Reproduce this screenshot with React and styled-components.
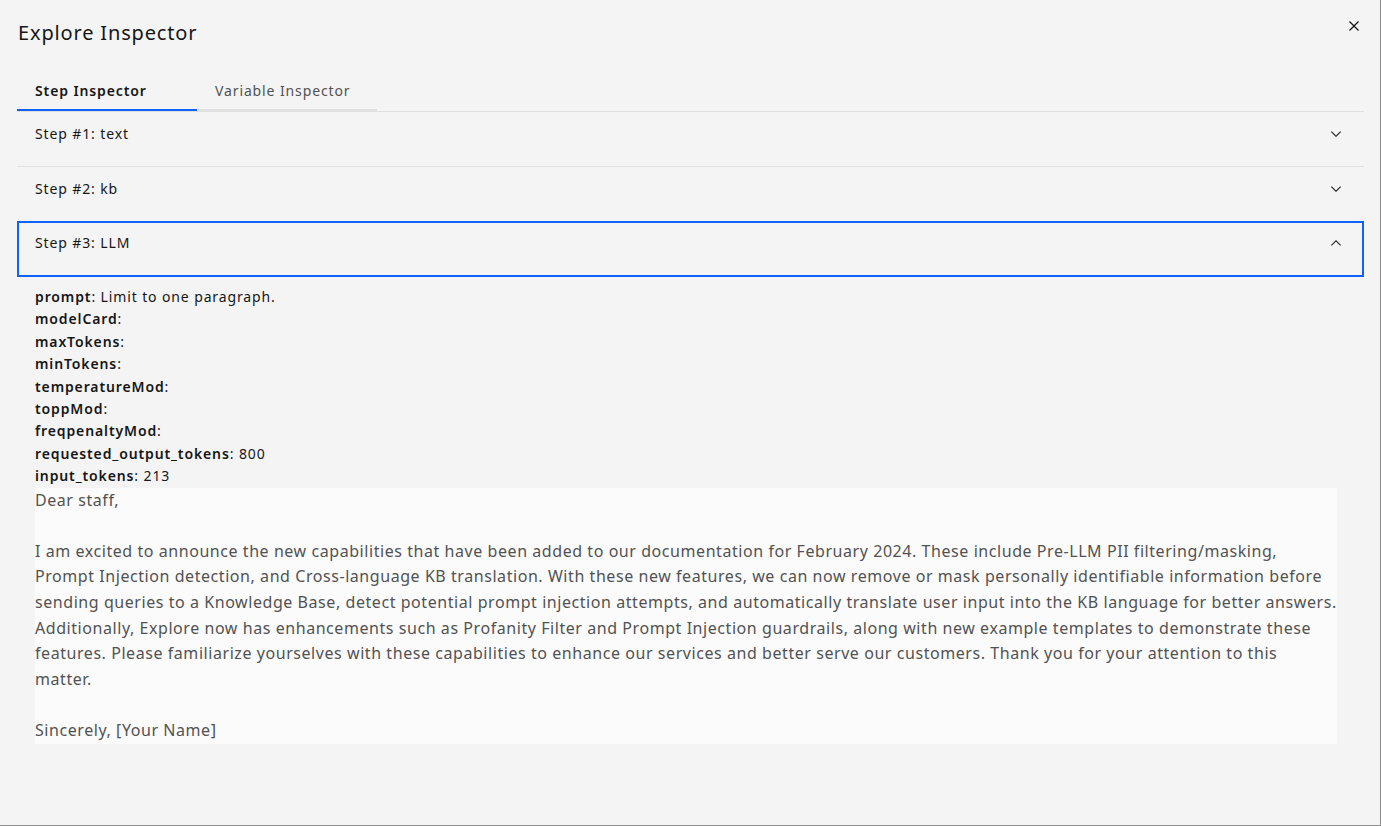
import React, { useState } from 'react';
import styled, { createGlobalStyle } from 'styled-components';

const GlobalStyle = createGlobalStyle`
  html, body {
    margin: 0;
    padding: 0;
    background: #f4f4f4;
  }
  body {
    font-family: "Noto Sans", "Open Sans", Arial, sans-serif;
    color: #161616;
    letter-spacing: 0.055em;
  }
  * {
    box-sizing: border-box;
  }
`;

const Modal = styled.div`
  width: 1381px;
  height: 826px;
  background: #f4f4f4;
  border-right: 1px solid #8d8d8d;
  border-bottom: 1px solid #8d8d8d;
  padding: 0 16px 0 17px;
  display: flex;
  flex-direction: column;
  overflow: hidden;
`;

const Header = styled.div`
  display: flex;
  justify-content: space-between;
  align-items: flex-start;
  height: 71px;
  padding-top: 19px;
`;

const Title = styled.h2`
  margin: 0 0 0 1px;
  font-size: 20px;
  line-height: 28px;
  font-weight: 400;
  letter-spacing: 0.042em;
  color: #161616;
`;

const CloseButton = styled.button`
  border: none;
  background: none;
  padding: 0;
  width: 20px;
  height: 20px;
  margin-top: -3px;
  cursor: pointer;
  color: #161616;
  display: flex;
  align-items: center;
  justify-content: center;
`;

const TabList = styled.div`
  display: flex;
  height: 40px;
`;

const Tab = styled.button`
  width: 180px;
  height: 40px;
  border: none;
  background: none;
  padding: 0 0 0 18px;
  text-align: left;
  font-family: inherit;
  letter-spacing: inherit;
  font-size: 14px;
  font-weight: ${(p) => (p.$active ? 600 : 400)};
  color: ${(p) => (p.$active ? '#161616' : '#525252')};
  border-bottom: 2px solid ${(p) => (p.$active ? '#0f62fe' : '#e0e0e0')};
  cursor: pointer;
`;

const Accordion = styled.div`
  border-top: 1px solid #e0e0e0;
`;

const Item = styled.div`
  border-bottom: ${(p) => (p.$open ? 'none' : '1px solid #e0e0e0')};
`;

const Heading = styled.button`
  width: 100%;
  height: ${(p) => (p.$open ? '56px' : '54px')};
  margin-top: ${(p) => (p.$open ? '-1px' : '0')};
  display: flex;
  justify-content: space-between;
  align-items: flex-start;
  border: 2px solid ${(p) => (p.$open ? '#0f62fe' : 'transparent')};
  background: none;
  padding: 10px 18px 0 16px;
  font-family: inherit;
  letter-spacing: inherit;
  font-size: 14px;
  line-height: 20px;
  color: #161616;
  text-align: left;
  cursor: pointer;
`;

const Chevron = styled.svg`
  width: 16px;
  height: 16px;
  margin-top: 2px;
  fill: #161616;
  transform: ${(p) => (p.$open ? 'rotate(180deg)' : 'none')};
`;

const Panel = styled.div`
  padding: 9px 27px 0 18px;
`;

const Field = styled.div`
  font-size: 14px;
  line-height: 22.4px;
  color: #161616;

  b {
    font-weight: 600;
  }
`;

const Output = styled.div`
  background: #fbfbfb;
  color: #525252;
  font-size: 16px;
  line-height: 25.6px;
  letter-spacing: 0.035em;
  white-space: pre;
`;

const steps = [
  { id: 1, name: 'text' },
  { id: 2, name: 'kb' },
  { id: 3, name: 'LLM' },
];

const fields = [
  ['prompt', 'Limit to one paragraph.'],
  ['modelCard', ''],
  ['maxTokens', ''],
  ['minTokens', ''],
  ['temperatureMod', ''],
  ['toppMod', ''],
  ['freqpenaltyMod', ''],
  ['requested_output_tokens', '800'],
  ['input_tokens', '213'],
];

// wrapped the way the reference output panel wraps it
const output = [
  'Dear staff,',
  '',
  'I am excited to announce the new capabilities that have been added to our documentation for February 2024. These include Pre-LLM PII filtering/masking,',
  'Prompt Injection detection, and Cross-language KB translation. With these new features, we can now remove or mask personally identifiable information before',
  'sending queries to a Knowledge Base, detect potential prompt injection attempts, and automatically translate user input into the KB language for better answers.',
  'Additionally, Explore now has enhancements such as Profanity Filter and Prompt Injection guardrails, along with new example templates to demonstrate these',
  'features. Please familiarize yourselves with these capabilities to enhance our services and better serve our customers. Thank you for your attention to this',
  'matter.',
  '',
  'Sincerely, [Your Name]',
].join('\n');

function ChevronIcon({ open }) {
  return (
    <Chevron $open={open} viewBox="0 0 16 16">
      <path d="M8 11L3 6 3.7 5.3 8 9.6 12.3 5.3 13 6z" />
    </Chevron>
  );
}

export default function App() {
  const [tab, setTab] = useState(0);
  const [open, setOpen] = useState(3);

  return (
    <Modal>
      <GlobalStyle />
      <Header>
        <Title>Explore Inspector</Title>
        <CloseButton aria-label="Close">
          <svg width="20" height="20" viewBox="0 0 32 32" fill="currentColor">
            <polygon points="17.4141 16 24 9.4141 22.5859 8 16 14.5859 9.4143 8 8 9.4141 14.5859 16 8 22.5859 9.4143 24 16 17.4141 22.5859 24 24 22.5859 17.4141 16" />
          </svg>
        </CloseButton>
      </Header>
      <TabList>
        <Tab $active={tab === 0} onClick={() => setTab(0)}>Step Inspector</Tab>
        <Tab $active={tab === 1} onClick={() => setTab(1)}>Variable Inspector</Tab>
      </TabList>
      <Accordion>
        {steps.map((s) => {
          const isOpen = open === s.id;
          return (
            <Item key={s.id} $open={isOpen}>
              <Heading $open={isOpen} onClick={() => setOpen(isOpen ? null : s.id)}>
                <span>Step #{s.id}: {s.name}</span>
                <ChevronIcon open={isOpen} />
              </Heading>
              {isOpen && (
                <Panel>
                  {fields.map(([k, v]) => (
                    <Field key={k}>
                      <b>{k}</b>: {v}
                    </Field>
                  ))}
                  <Output>{output}</Output>
                </Panel>
              )}
            </Item>
          );
        })}
      </Accordion>
    </Modal>
  );
}
